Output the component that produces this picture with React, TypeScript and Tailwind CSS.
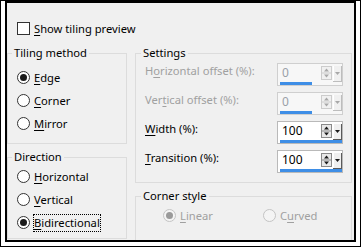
import React from "react";

const ui = "font-['Segoe_UI','Noto_Sans',sans-serif] text-[11.2px] leading-[16px]";

function Label({ text, u, disabled }: { text: string; u: number; disabled?: boolean }) {
  return (
    <span className={disabled ? "text-[#a0a0a0]" : "text-black"}>
      {text.slice(0, u)}
      <span className="underline underline-offset-2">{text[u]}</span>
      {text.slice(u + 1)}
    </span>
  );
}

function Radio({ checked, disabled }: { checked?: boolean; disabled?: boolean }) {
  return (
    <span
      className={
        "flex h-[13px] w-[13px] shrink-0 items-center justify-center rounded-full border " +
        (disabled ? "border-[#c4c4c4] bg-[#f4f4f4]" : "border-[#333333] bg-white")
      }
    >
      {checked && (
        <span className={"h-[7px] w-[7px] rounded-full " + (disabled ? "bg-[#9a9a9a]" : "bg-[#1a1a1a]")} />
      )}
    </span>
  );
}

function RadioRow({ text, u, checked, focus }: { text: string; u: number; checked?: boolean; focus?: boolean }) {
  return (
    <div className="flex h-[23px] items-center gap-[3px]">
      <Radio checked={checked} />
      <span className={focus ? "border border-dotted border-black" : "px-[1px]"}>
        <Label text={text} u={u} />
      </span>
    </div>
  );
}

function Spin({ value, bar, disabled }: { value: string; bar: number; disabled?: boolean }) {
  const ink = disabled ? "#a8a8a8" : "#1a1a1a";
  return (
    <div
      className={
        "flex h-[23px] w-[66px] flex-col border " +
        (disabled ? "border-[#cfcfcf] bg-[#f7f7f7]" : "border-[#b9b9b9] bg-white")
      }
    >
      <div className="flex h-[19px] items-start">
        <span className={"flex-1 pl-[4px] pt-[1px] text-[12px] " + (disabled ? "text-[#9aa0a8]" : "text-black")}>{value}</span>
        <svg width="11" height="14" viewBox="0 0 11 14" className="mt-[2px]">
          <rect x="0.5" y="0.5" width="10" height="13" fill={disabled ? "#f0f0f0" : "#e8e8e8"} stroke={disabled ? "#cccccc" : "#8a8a8a"} />
          <line x1="1" y1="7" x2="10" y2="7" stroke={disabled ? "#cccccc" : "#8a8a8a"} />
          <path d="M5.5 2.5 L8 5.5 L3 5.5 Z" fill={ink} />
          <path d="M3 8.5 L8 8.5 L5.5 11.5 Z" fill={ink} />
        </svg>
        <svg width="9" height="16" viewBox="0 0 9 16" className="ml-[1px] mt-[2px]">
          <rect x="0" y="0" width="9" height="16" fill="#f0f0f0" />
          <line x1="0.5" y1="0" x2="0.5" y2="16" stroke="#ffffff" />
          <line x1="8.5" y1="0" x2="8.5" y2="16" stroke={disabled ? "#bdbdbd" : "#5a5a5a"} />
          <line x1="0" y1="15.5" x2="9" y2="15.5" stroke={disabled ? "#bdbdbd" : "#5a5a5a"} />
          <path d="M2 6 L7 6 L4.5 9 Z" fill={ink} />
        </svg>
      </div>
      <div className="pl-[2px]">
        <div className="h-[3px] bg-[#3e8ee6]" style={{ width: bar }} />
      </div>
    </div>
  );
}

function SettingRow({ text, u, value, bar, disabled }: { text: string; u: number; value: string; bar: number; disabled?: boolean }) {
  return (
    <div className="flex h-[23px] items-start">
      <span className="w-[141px] pl-[9px]">
        <Label text={text} u={u} disabled={disabled} />
      </span>
      <Spin value={value} bar={bar} disabled={disabled} />
    </div>
  );
}

export default function App() {
  return (
    <div className={"h-[247px] w-[361px] border border-black bg-white " + ui}>
      <div className="ml-[4px] h-[241px] w-[351px] overflow-hidden border-2 border-black bg-[#f0f0f0]">
        {/* preview toggle */}
        <div className="flex h-[13px] items-center gap-[4px] pl-[10px] mt-[19px]">
          <span className="h-[13px] w-[13px] border border-[#333333] bg-white" />
          <Label text="Show tiling preview" u={0} />
        </div>

        <div className="mt-[10px] flex gap-[8px]">
          {/* left column */}
          <div className="flex w-[120px] flex-col gap-[5px]">
            <fieldset className="h-[99px] border border-[#dcdcdc] p-0">
              <legend className="ml-[4px] px-[2px]">Tiling method</legend>
              <div className="pl-[9px] pt-[5px]">
                <RadioRow text="Edge" u={0} checked />
                <RadioRow text="Corner" u={0} />
                <RadioRow text="Mirror" u={0} />
              </div>
            </fieldset>
            <fieldset className="h-[90px] border border-[#dcdcdc] p-0">
              <legend className="ml-[4px] px-[2px]">Direction</legend>
              <div className="pl-[9px]">
                <RadioRow text="Horizontal" u={0} />
                <RadioRow text="Vertical" u={0} />
                <RadioRow text="Bidirectional" u={0} checked focus />
              </div>
            </fieldset>
          </div>

          {/* right column */}
          <div className="flex w-[217px] flex-col gap-[5px]">
            <fieldset className="h-[138px] border border-[#dcdcdc] p-0">
              <legend className="ml-[5px] px-[2px]">Settings</legend>
              <div className="flex flex-col gap-[6px] pt-[2px]">
                <SettingRow text="Horizontal offset (%):" u={1} value="0" bar={32} disabled />
                <SettingRow text="Vertical offset (%):" u={3} value="0" bar={32} disabled />
                <SettingRow text="Width (%):" u={0} value="100" bar={62} />
                <SettingRow text="Transition (%):" u={0} value="100" bar={62} />
              </div>
            </fieldset>
            <fieldset className="h-[60px] border border-[#dcdcdc] p-0">
              <legend className="ml-[5px] px-[2px]">Corner style</legend>
              <div className="flex pl-[27px]">
                <div className="flex h-[23px] w-[100px] items-center gap-[4px]">
                  <Radio checked disabled />
                  <Label text="Linear" u={0} disabled />
                </div>
                <div className="flex h-[23px] items-center gap-[4px]">
                  <Radio disabled />
                  <Label text="Curved" u={1} disabled />
                </div>
              </div>
            </fieldset>
          </div>
        </div>
      </div>
    </div>
  );
}
